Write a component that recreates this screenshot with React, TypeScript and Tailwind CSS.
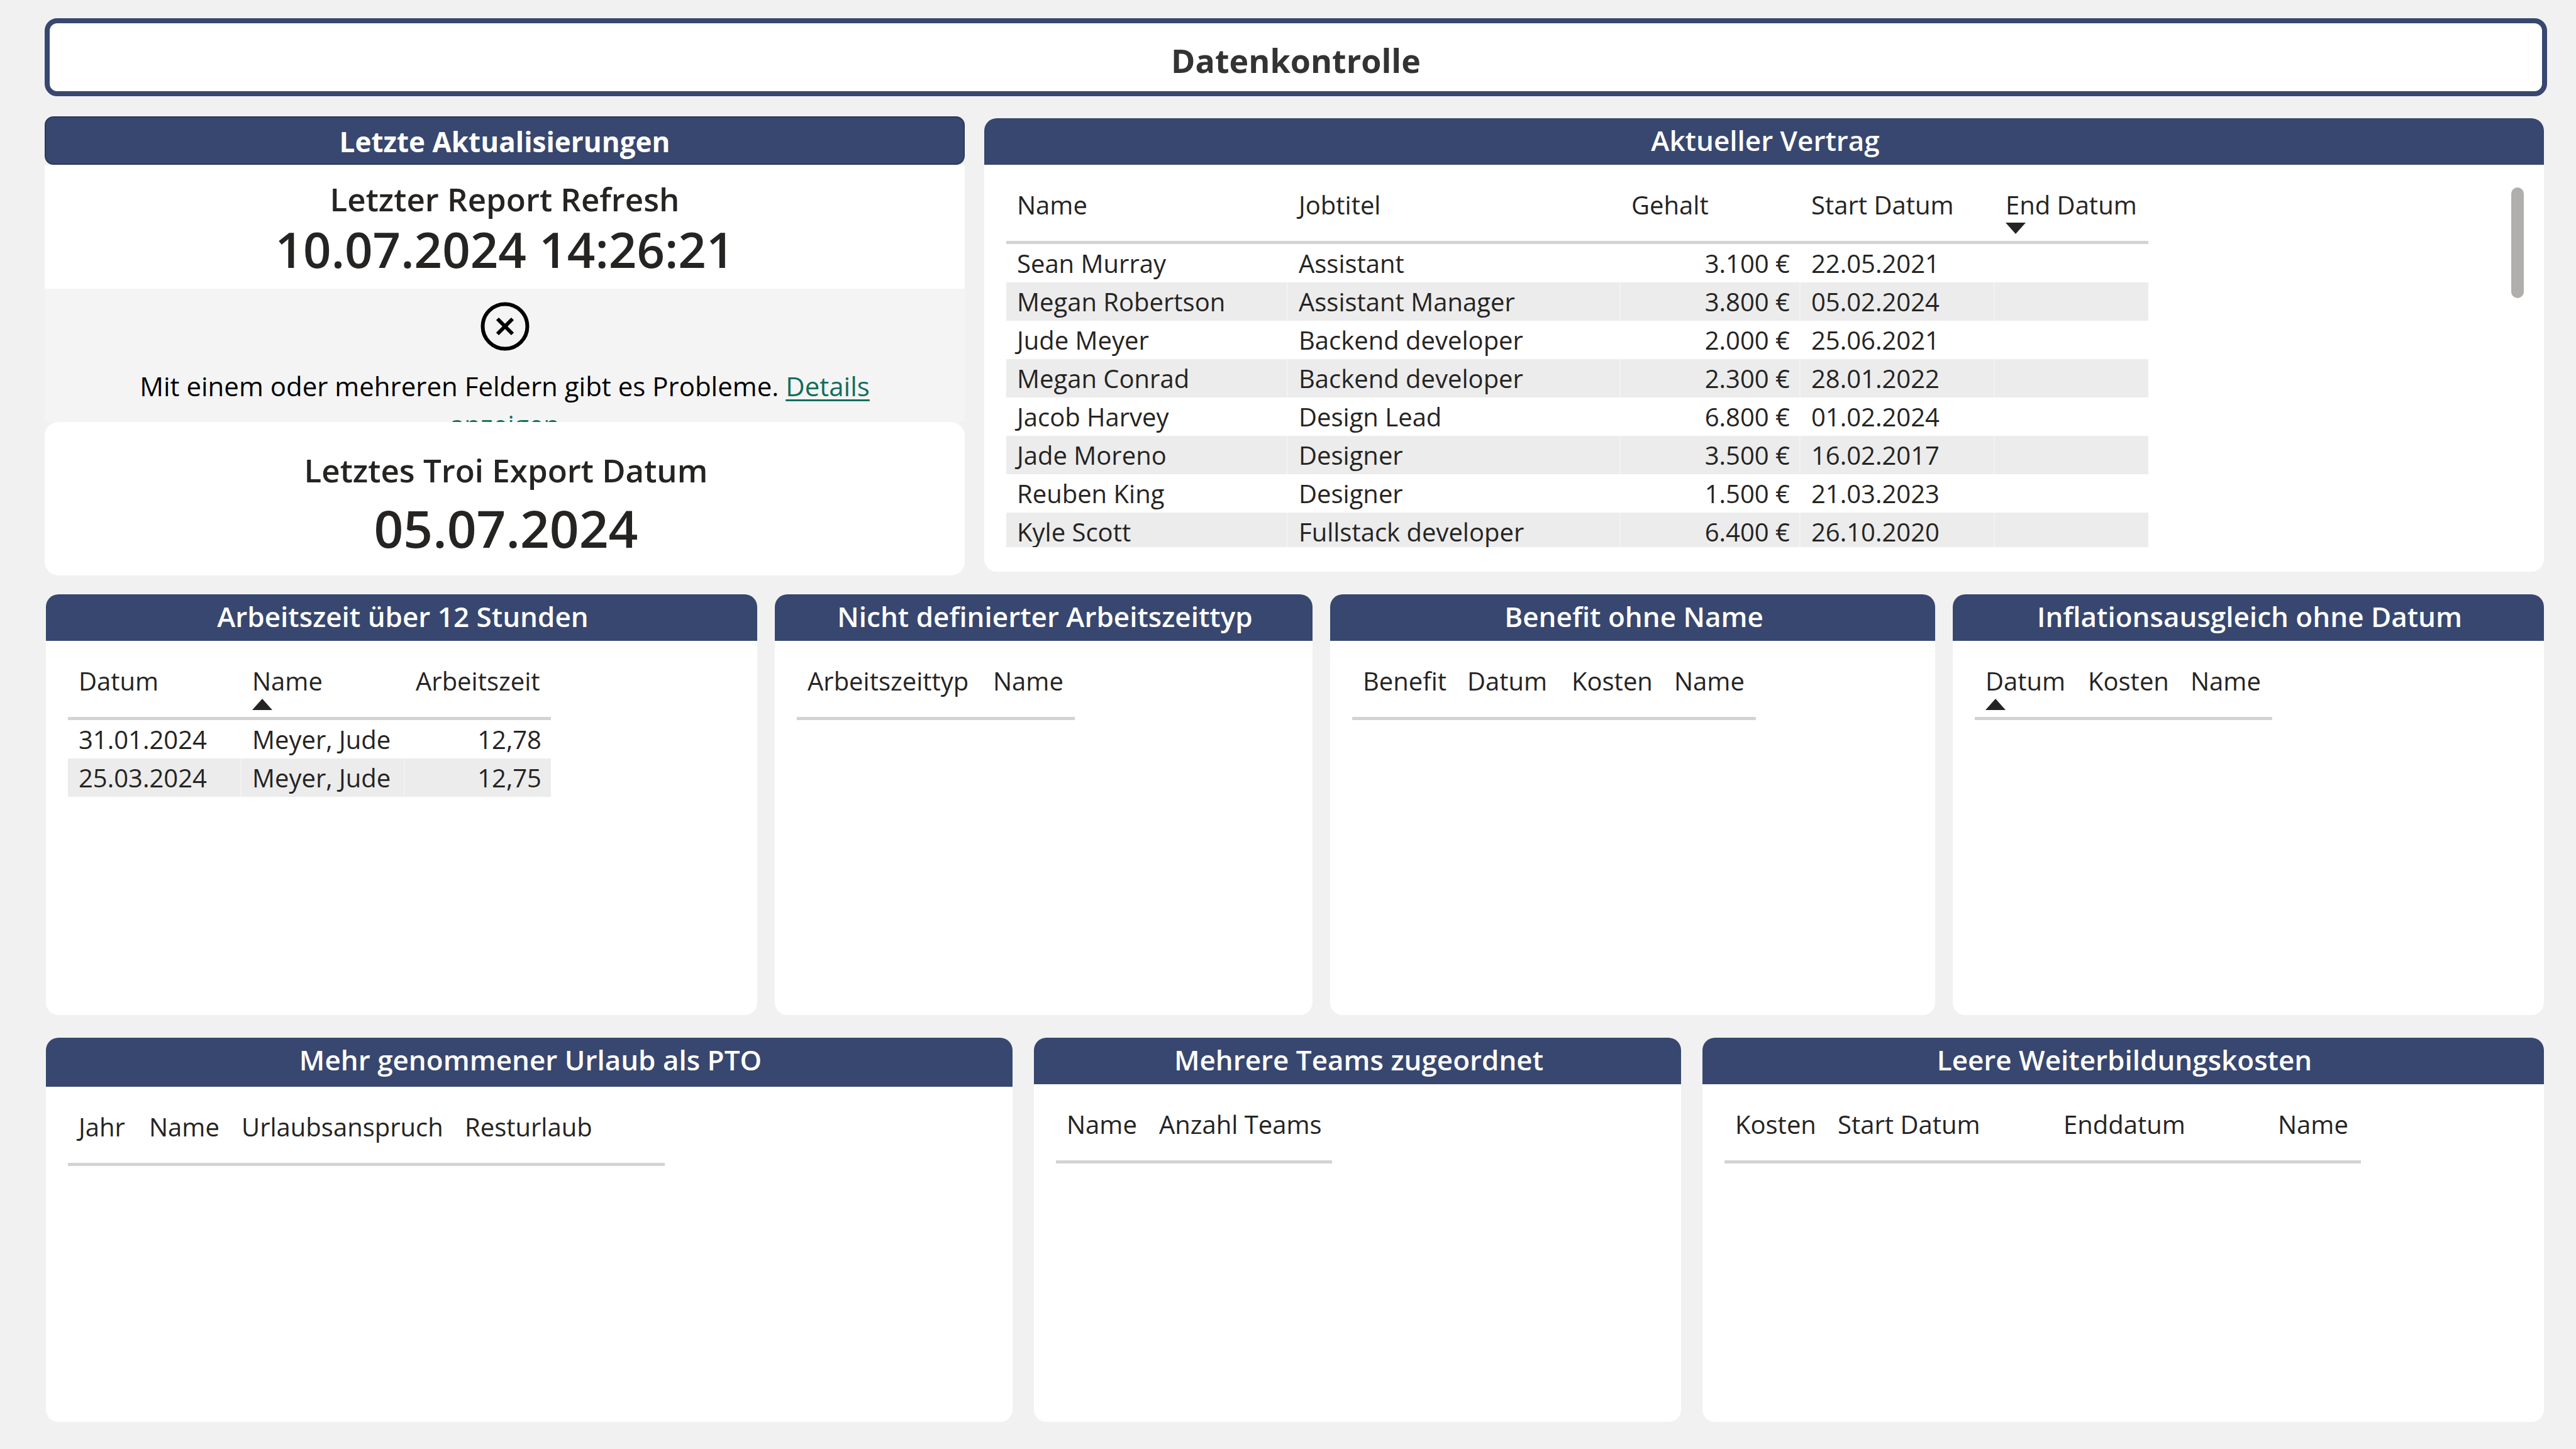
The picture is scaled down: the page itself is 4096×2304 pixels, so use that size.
import type { ReactNode } from "react";

type Column = { label: string; width: string; sort?: "asc" | "desc"; numeric?: boolean };

function SortMark({ dir }: { dir?: "asc" | "desc" }) {
  return (
    <span className="block h-[18px]">
      {dir && (
        <svg viewBox="0 0 32 18" className="h-[18px] w-8" aria-hidden="true">
          <path d={dir === "asc" ? "M16 0 32 18H0Z" : "M0 0H32L16 18Z"} fill="#252423" />
        </svg>
      )}
    </span>
  );
}

function DataTable({ label, columns, rows = [] }: { label: string; columns: Column[]; rows?: string[][] }) {
  return (
    <table aria-label={label} className="table-fixed border-separate border-spacing-0 text-[40px] text-[#252423]">
      <thead>
        <tr>
          {columns.map((c) => (
            <th
              key={c.label}
              scope="col"
              className={`${c.width} border-b-[5px] border-[#d3d3d3] pr-[13px] pb-[11px] pl-[17px] text-left align-top leading-[56px] font-normal whitespace-nowrap`}
            >
              {c.label}
              <SortMark dir={c.sort} />
            </th>
          ))}
        </tr>
      </thead>
      <tbody>
        {rows.map((row, i) => (
          <tr key={i} className="even:bg-[#ececec]">
            {row.map((cell, j) => (
              <td
                key={j}
                className={`h-[61px] border-r-2 border-white/30 pr-[15px] pl-[17px] leading-[61px] whitespace-nowrap last:border-r-0 ${columns[j].numeric ? "text-right" : "text-left"}`}
              >
                {cell}
              </td>
            ))}
          </tr>
        ))}
      </tbody>
    </table>
  );
}

function Panel({
  title,
  className = "",
  headClass = "pb-1",
  children,
}: {
  title: string;
  className?: string;
  headClass?: string;
  children: ReactNode;
}) {
  return (
    <section className={`overflow-hidden rounded-[20px] bg-white ${className}`}>
      <h2 className={`bg-[#38476f] pl-1 text-center text-[44px] leading-[70px] font-semibold text-white ${headClass}`}>
        {title}
      </h2>
      <div className="flex items-start justify-between pt-9 pr-8 pl-[35px]">{children}</div>
    </section>
  );
}

const contracts = [
  ["Sean Murray", "Assistant", "3.100 €", "22.05.2021", ""],
  ["Megan Robertson", "Assistant Manager", "3.800 €", "05.02.2024", ""],
  ["Jude Meyer", "Backend developer", "2.000 €", "25.06.2021", ""],
  ["Megan Conrad", "Backend developer", "2.300 €", "28.01.2022", ""],
  ["Jacob Harvey", "Design Lead", "6.800 €", "01.02.2024", ""],
  ["Jade Moreno", "Designer", "3.500 €", "16.02.2017", ""],
  ["Reuben King", "Designer", "1.500 €", "21.03.2023", ""],
  ["Kyle Scott", "Fullstack developer", "6.400 €", "26.10.2020", ""],
];

export default function App() {
  return (
    <main className="flex min-h-screen flex-col bg-[#f1f1f1] pt-[29px] pr-[46px] pb-[43px] pl-[71px] font-['Open_Sans','Noto_Sans',sans-serif]">
      <h1 className="rounded-[20px] border-8 border-[#38476f] bg-white pt-[10px] text-center text-[52px] leading-[98px] font-bold text-[#333]">
        Datenkontrolle
      </h1>

      <div className="mt-8 mr-[5px] grid grid-cols-[1463fr_2480fr] gap-[31px]">
        <section className="text-center text-[#252423]">
          <h2 className="rounded-[14px] border-2 border-[#2d3858] bg-[#38476f] pt-[3px] text-[44px] leading-[70px] font-bold text-white">
            Letzte Aktualisierungen
          </h2>
          <div className="bg-white pt-[14px] pb-[23px] font-semibold">
            <p className="text-[51px] leading-[80px]">Letzter Report Refresh</p>
            <p className="text-[78px] leading-[80px]">10.07.2024 14:26:21</p>
          </div>
          <div className="bg-[#f4f4f4] px-20 pt-[21px] text-black">
            <svg viewBox="0 0 78 78" className="mx-auto size-[78px]" fill="none" stroke="#000" aria-hidden="true">
              <circle cx="39" cy="39" r="35.5" strokeWidth="6" />
              <path d="M27 27 51 51M51 27 27 51" strokeWidth="6" />
            </svg>
            <p className="mt-[25px] h-[88px] overflow-hidden text-[42px] leading-[61px]">
              Mit einem oder mehreren Feldern gibt es Probleme.{" "}
              <a href="#details" className="text-[#0f6e5c] underline decoration-[3px] underline-offset-[5px]">
                Details anzeigen
              </a>
            </p>
          </div>
          <div className="rounded-[22px] bg-white pt-9 pb-6 pl-1 font-semibold">
            <p className="text-[51px] leading-[80px]">Letztes Troi Export Datum</p>
            <p className="text-[82px] leading-[104px]">05.07.2024</p>
          </div>
        </section>

        <Panel title="Aktueller Vertrag" className="mt-[3px] mb-[6px]">
          <div className="max-h-[572px] overflow-hidden">
            <DataTable
              label="Aktueller Vertrag"
              columns={[
                { label: "Name", width: "w-[448px]" },
                { label: "Jobtitel", width: "w-[529px]" },
                { label: "Gehalt", width: "w-[286px]", numeric: true },
                { label: "Start Datum", width: "w-[309px]" },
                { label: "End Datum", width: "w-[244px]", sort: "desc" },
              ]}
              rows={contracts}
            />
          </div>
          <div className="h-44 w-5 rounded-full bg-[#b0afae]" />
        </Panel>
      </div>

      <div className="mt-[30px] mr-[5px] ml-[2px] grid flex-[669_1_0px] grid-cols-[1131fr_855fr_962fr_940fr] gap-7">
        <Panel title="Arbeitszeit über 12 Stunden">
          <DataTable
            label="Arbeitszeit über 12 Stunden"
            columns={[
              { label: "Datum", width: "w-[276px]" },
              { label: "Name", width: "w-[260px]", sort: "asc" },
              { label: "Arbeitszeit", width: "w-[232px]", numeric: true },
            ]}
            rows={[
              ["31.01.2024", "Meyer, Jude", "12,78"],
              ["25.03.2024", "Meyer, Jude", "12,75"],
            ]}
          />
        </Panel>
        <Panel title="Nicht definierter Arbeitszeittyp">
          <DataTable
            label="Nicht definierter Arbeitszeittyp"
            columns={[
              { label: "Arbeitszeittyp", width: "w-[295px]" },
              { label: "Name", width: "w-[147px]" },
            ]}
          />
        </Panel>
        <Panel title="Benefit ohne Name">
          <DataTable
            label="Benefit ohne Name"
            columns={[
              { label: "Benefit", width: "w-[166px]" },
              { label: "Datum", width: "w-[166px]" },
              { label: "Kosten", width: "w-[163px]" },
              { label: "Name", width: "w-[147px]" },
            ]}
          />
        </Panel>
        <Panel title="Inflationsausgleich ohne Datum">
          <DataTable
            label="Inflationsausgleich ohne Datum"
            columns={[
              { label: "Datum", width: "w-[163px]", sort: "asc" },
              { label: "Kosten", width: "w-[163px]" },
              { label: "Name", width: "w-[147px]" },
            ]}
          />
        </Panel>
      </div>

      <div className="mt-9 mr-[5px] ml-[2px] grid flex-[611_1_0px] grid-cols-[1537fr_1029fr_1338fr] gap-[34px]">
        <Panel title="Mehr genommener Urlaub als PTO" headClass="pb-2">
          <DataTable
            label="Mehr genommener Urlaub als PTO"
            columns={[
              { label: "Jahr", width: "w-[112px]" },
              { label: "Name", width: "w-[147px]" },
              { label: "Urlaubsanspruch", width: "w-[355px]" },
              { label: "Resturlaub", width: "w-[335px]" },
            ]}
          />
        </Panel>
        <Panel title="Mehrere Teams zugeordnet">
          <DataTable
            label="Mehrere Teams zugeordnet"
            columns={[
              { label: "Name", width: "w-[147px]" },
              { label: "Anzahl Teams", width: "w-[292px]" },
            ]}
          />
        </Panel>
        <Panel title="Leere Weiterbildungskosten">
          <DataTable
            label="Leere Weiterbildungskosten"
            columns={[
              { label: "Kosten", width: "w-[163px]" },
              { label: "Start Datum", width: "w-[359px]" },
              { label: "Enddatum", width: "w-[341px]" },
              { label: "Name", width: "w-[149px]" },
            ]}
          />
        </Panel>
      </div>
    </main>
  );
}
